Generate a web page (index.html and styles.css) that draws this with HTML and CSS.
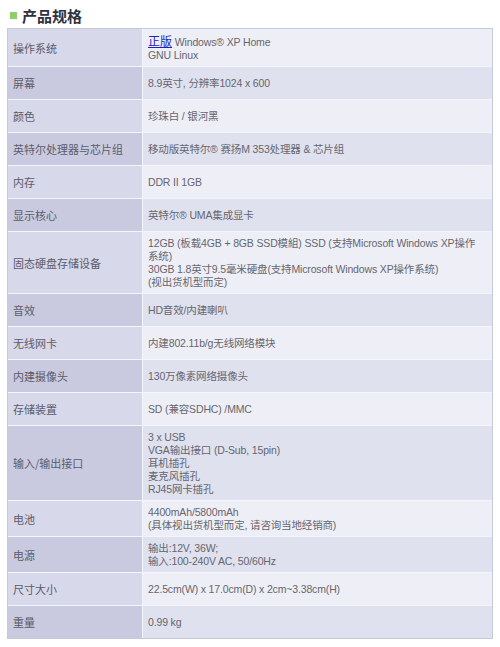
FILE: index.html
```html
<!DOCTYPE html>
<html lang="zh-CN">
<head>
<meta charset="utf-8">
<title>产品规格</title>
<link rel="stylesheet" href="styles.css">
</head>
<body>
<div class="page">
  <h2 class="title"><span class="mark"></span>产品规格</h2>
  <table class="spec">
    <tr class="lt"><th>操作系统</th><td><a href="#" class="lk">正版</a> Windows® XP Home<br>GNU Linux</td></tr>
    <tr class="dk"><th>屏幕</th><td>8.9英寸, 分辨率1024 x 600</td></tr>
    <tr class="lt"><th>颜色</th><td>珍珠白 / 银河黑</td></tr>
    <tr class="dk"><th>英特尔处理器与芯片组</th><td>移动版英特尔® 赛扬M 353处理器 &amp; 芯片组</td></tr>
    <tr class="lt"><th>内存</th><td>DDR II 1GB</td></tr>
    <tr class="dk"><th>显示核心</th><td>英特尔® UMA集成显卡</td></tr>
    <tr class="lt"><th>固态硬盘存储设备</th><td>12GB (板载4GB + 8GB SSD模組) SSD (支持Microsoft Windows XP操作<br>系统)<br>30GB 1.8英寸9.5毫米硬盘(支持Microsoft Windows XP操作系统)<br>(视出货机型而定)</td></tr>
    <tr class="dk"><th>音效</th><td>HD音效/内建喇叭</td></tr>
    <tr class="lt"><th>无线网卡</th><td>内建802.11b/g无线网络模块</td></tr>
    <tr class="dk"><th>内建摄像头</th><td>130万像素网络摄像头</td></tr>
    <tr class="lt"><th>存储装置</th><td>SD (兼容SDHC) /MMC</td></tr>
    <tr class="dk"><th>输入/输出接口</th><td>3 x USB<br>VGA输出接口 (D-Sub, 15pin)<br>耳机插孔<br>麦克风插孔<br>RJ45网卡插孔</td></tr>
    <tr class="lt"><th>电池</th><td>4400mAh/5800mAh<br>(具体视出货机型而定, 请咨询当地经销商)</td></tr>
    <tr class="dk"><th>电源</th><td>输出:12V, 36W;<br>输入:100-240V AC, 50/60Hz</td></tr>
    <tr class="lt"><th>尺寸大小</th><td>22.5cm(W) x 17.0cm(D) x 2cm~3.38cm(H)</td></tr>
    <tr class="dk"><th>重量</th><td>0.99 kg</td></tr>
  </table>
</div>
</body>
</html>
```

FILE: styles.css
```css
html, body {
  margin: 0;
  padding: 0;
  background: #ffffff;
}
.page {
  padding: 3px 7px 0 7px;
  font-family: "Liberation Sans", "Noto Sans CJK SC", sans-serif;
}
.title {
  margin: 0;
  height: 25px;
  display: flex;
  align-items: center;
  gap: 5px;
  font-family: "Noto Sans CJK SC", sans-serif;
  font-size: 15px;
  font-weight: bold;
  color: #2f3040;
  line-height: 18px;
  padding-left: 3px;
}
.mark {
  width: 7px;
  height: 7px;
  background: #8fcf6a;
  display: inline-block;
}
.spec {
  width: 486px;
  border-collapse: separate;
  border-spacing: 0;
  border: 1px solid #c6c9dc;
  background: #f4f5fa;
  table-layout: fixed;
}
.spec th,
.spec td {
  height: 23px;
  padding: 5px 5px 4px 5px;
  font-size: 10.5px;
  line-height: 13px;
  color: #66666f;
  text-align: left;
  vertical-align: middle;
  border-bottom: 1px solid #f4f5fa;
}
.spec td {
  letter-spacing: -0.15px;
}
.spec tr:last-child th,
.spec tr:last-child td {
  border-bottom: none;
}
.spec th {
  width: 124px;
  font-weight: normal;
  font-family: "Noto Sans CJK SC", sans-serif;
  font-size: 11px;
  color: #5c5c6c;
  border-right: 1px solid #f4f5fa;
}
.lt th { background: #d7d8e9; }
.dk th { background: #c9cadf; }
.lt td { background: #eeeff6; }
.dk td { background: #dfe1ee; }
.lk {
  color: #1f1fbf;
  text-decoration: underline;
  font-family: "Noto Sans CJK SC", sans-serif;
  font-size: 12px;
  letter-spacing: 0;
}
```
